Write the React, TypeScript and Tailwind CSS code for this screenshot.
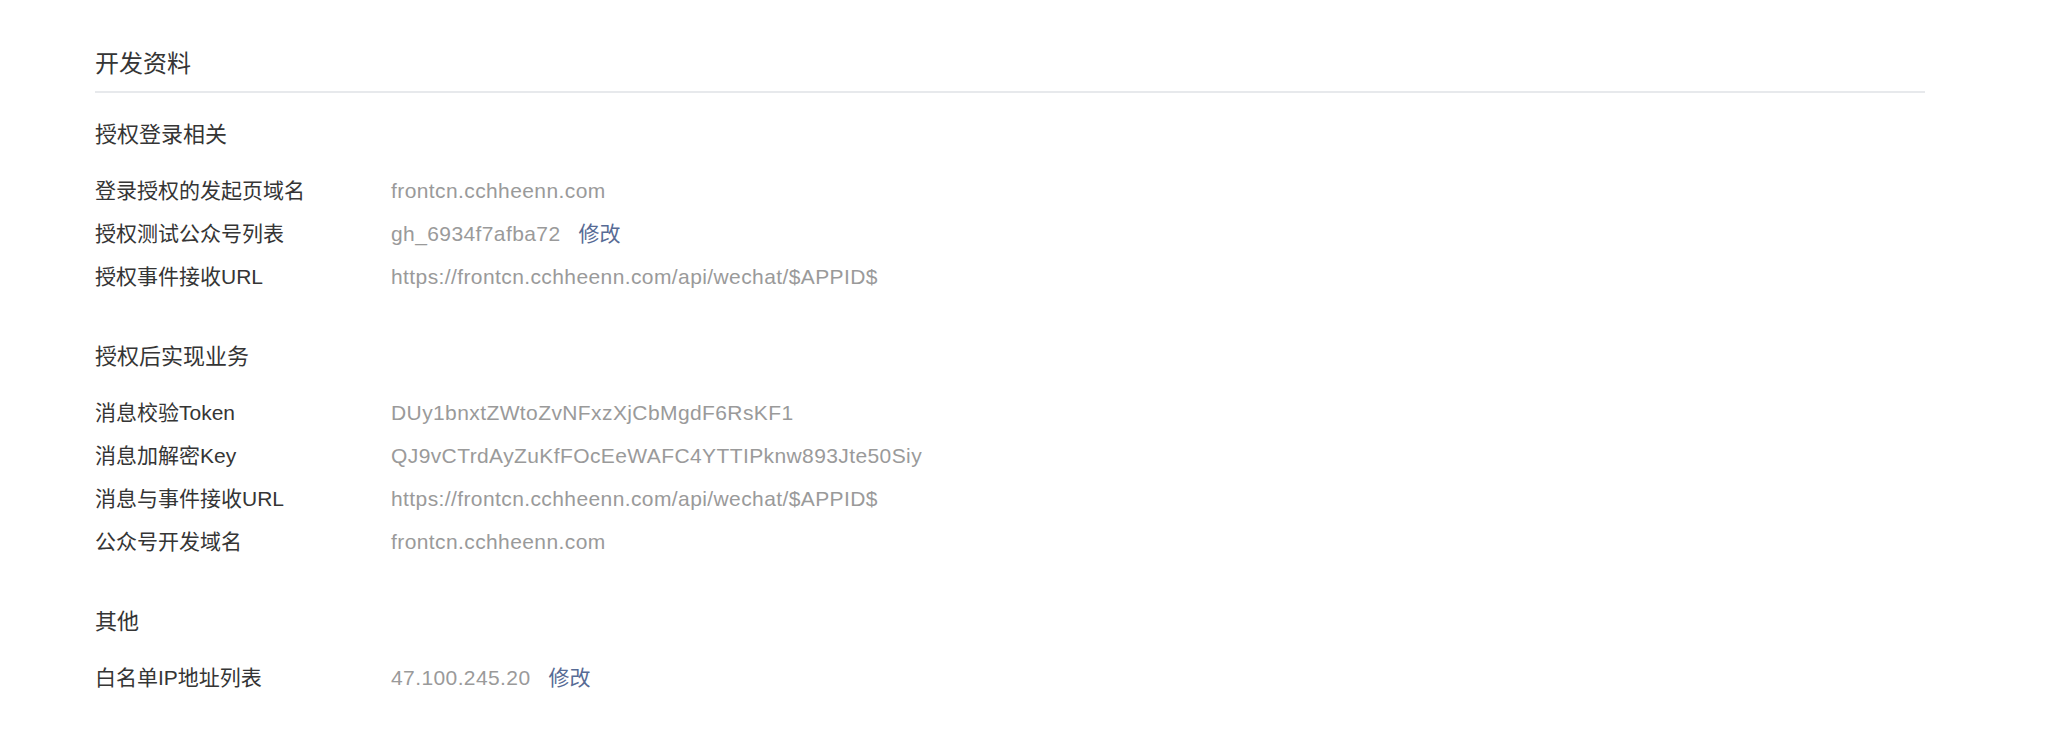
import React from "react";

type Row = { label: string; value: string; edit?: boolean };

const sections: { title: string; rows: Row[] }[] = [
  {
    title: "授权登录相关",
    rows: [
      { label: "登录授权的发起页域名", value: "frontcn.cchheenn.com" },
      { label: "授权测试公众号列表", value: "gh_6934f7afba72", edit: true },
      { label: "授权事件接收URL", value: "https://frontcn.cchheenn.com/api/wechat/$APPID$" },
    ],
  },
  {
    title: "授权后实现业务",
    rows: [
      { label: "消息校验Token", value: "DUy1bnxtZWtoZvNFxzXjCbMgdF6RsKF1" },
      { label: "消息加解密Key", value: "QJ9vCTrdAyZuKfFOcEeWAFC4YTTIPknw893Jte50Siy" },
      { label: "消息与事件接收URL", value: "https://frontcn.cchheenn.com/api/wechat/$APPID$" },
      { label: "公众号开发域名", value: "frontcn.cchheenn.com" },
    ],
  },
  {
    title: "其他",
    rows: [{ label: "白名单IP地址列表", value: "47.100.245.20", edit: true }],
  },
];

const App = () => {
  return (
    <div className="min-h-[754px] w-full bg-white font-['Liberation_Sans','Noto_Sans_CJK_SC',sans-serif]">
      <div className="w-[1830px] ml-[95px] pt-[46px]">
        <div className="pb-[9px] border-b-2 border-[#e7e9ec]">
          <h2 className="text-[24px] leading-[36px] text-[#353535]">开发资料</h2>
        </div>

        <div className="flex flex-col gap-[42px] pt-[25px]">
          {sections.map((s) => (
            <div key={s.title} className="flex flex-col">
              <h3 className="text-[22px] leading-[34px] text-[#353535] mb-[17px]">{s.title}</h3>
              {s.rows.map((r) => (
                <div key={r.label} className="flex items-center h-[43px] text-[21px]">
                  <div className="w-[296px] shrink-0 text-[#353535]">{r.label}</div>
                  <div className="flex items-center gap-[18px]">
                    <span className="text-[#9a9a9a] tracking-[0.4px]">{r.value}</span>
                    {r.edit && <a className="text-[#576b95] cursor-pointer">修改</a>}
                  </div>
                </div>
              ))}
            </div>
          ))}
        </div>
      </div>
    </div>
  );
};

export default App;
